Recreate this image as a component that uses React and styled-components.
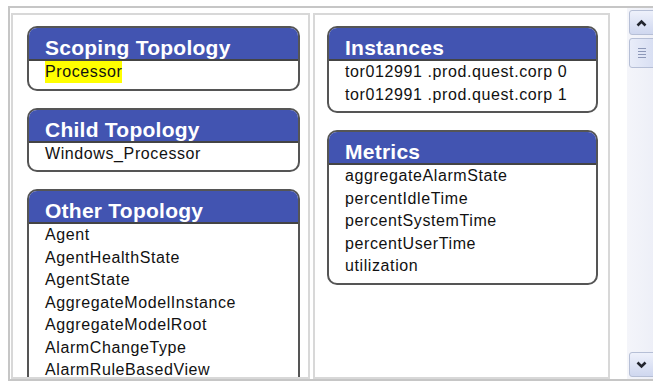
import React from "react";
import styled, { createGlobalStyle } from "styled-components";

const GlobalStyle = createGlobalStyle`
  html, body {
    margin: 0;
    padding: 0;
    background: #ffffff;
    overflow: hidden;
  }
  body {
    font-family: "Liberation Sans", Arial, sans-serif;
  }
`;

const Frame = styled.div`
  display: flex;
  width: 650px;
  height: 371px;
  margin: 6px 0 0 8px;
  border-top: 2px solid #c6c6c6;
  border-left: 2px solid #c6c6c6;
  border-bottom: 2px solid #c6c6c6;
  background: #ffffff;
`;

const Panels = styled.div`
  display: flex;
  gap: 3px;
  padding: 5px 0 0 1px;
`;

const Panel = styled.div`
  box-sizing: border-box;
  width: ${(p) => p.$width}px;
  height: 100%;
  border: 2px solid #d8d8d8;
  padding: ${(p) => p.$pad};
  display: flex;
  flex-direction: column;
  gap: 17px;
  overflow: hidden;
`;

const Card = styled.div`
  flex-shrink: 0;
  border: 2px solid #555555;
  border-radius: 10px;
  overflow: hidden;
  background: #ffffff;
`;

const Header = styled.div`
  height: 33px;
  padding: 8px 0 0 16px;
  box-sizing: border-box;
  background: #4254b1;
  border-bottom: 2px solid #444444;
  color: #ffffff;
  font-family: "Liberation Sans", Arial, sans-serif;
  font-weight: bold;
  font-size: 21px;
  letter-spacing: 0.25px;
  line-height: 23px;
  white-space: nowrap;
`;

const Body = styled.div`
  padding: 0 6px 5px 16px;
  font-size: 16px;
  line-height: 22.5px;
  letter-spacing: 0.6px;
  color: #111111;
`;

const Item = styled.div`
  white-space: nowrap;
`;

const Highlight = styled.span`
  display: inline-block;
  background: #ffff00;
  line-height: 22px;
`;

const ScrollBar = styled.div`
  margin-left: 17px;
  width: 31px;
  display: flex;
  flex-direction: column;
  padding: 2px 0 2px 2px;
  box-sizing: border-box;
  background: linear-gradient(to right, #f4f5fa, #eceef7);
`;

const ScrollButton = styled.div`
  height: 25px;
  box-sizing: border-box;
  border: 1px solid #b6bfd6;
  border-radius: 3px;
  background: linear-gradient(to bottom, #eef1fb, #cfd7ef);
  display: flex;
  align-items: center;
  justify-content: center;
  padding-right: 4px;
  margin-top: ${(p) => (p.$down ? "auto" : "0")};
`;

const Thumb = styled.div`
  height: 30px;
  margin-top: 3px;
  box-sizing: border-box;
  border: 1px solid #b6bfd6;
  border-radius: 3px;
  background: linear-gradient(to right, #e9edf9, #d6ddf2);
  display: flex;
  flex-direction: column;
  align-items: center;
  justify-content: center;
  gap: 2px;
  padding-right: 4px;
`;

const Grip = styled.div`
  width: 8px;
  height: 1px;
  background: #8d98b8;
`;

const Chevron = ({ down }) => (
  <svg width="11" height="8" viewBox="0 0 11 8">
    <path
      d={down ? "M1.5 1.5 L5.5 5.5 L9.5 1.5" : "M1.5 6.5 L5.5 2.5 L9.5 6.5"}
      fill="none"
      stroke="#22252e"
      strokeWidth="2.6"
    />
  </svg>
);

const left = [
  { title: "Scoping Topology", items: ["Processor"], highlight: 0 },
  { title: "Child Topology", items: ["Windows_Processor"] },
  {
    title: "Other Topology",
    items: [
      "Agent",
      "AgentHealthState",
      "AgentState",
      "AggregateModelInstance",
      "AggregateModelRoot",
      "AlarmChangeType",
      "AlarmRuleBasedView",
    ],
  },
];

const right = [
  {
    title: "Instances",
    items: ["tor012991 .prod.quest.corp 0", "tor012991 .prod.quest.corp 1"],
  },
  {
    title: "Metrics",
    items: [
      "aggregateAlarmState",
      "percentIdleTime",
      "percentSystemTime",
      "percentUserTime",
      "utilization",
    ],
  },
];

function Section({ title, items, highlight }) {
  return (
    <Card>
      <Header>{title}</Header>
      <Body>
        {items.map((it, i) => (
          <Item key={it}>
            {i === highlight ? <Highlight>{it}</Highlight> : it}
          </Item>
        ))}
      </Body>
    </Card>
  );
}

export default function App() {
  return (
    <>
      <GlobalStyle />
      <Frame>
        <Panels>
          <Panel $width={299} $pad="11px 8px 0 14px">
            {left.map((s) => (
              <Section key={s.title} {...s} />
            ))}
          </Panel>
          <Panel $width={297} $pad="11px 10px 0 12px">
            {right.map((s) => (
              <Section key={s.title} {...s} />
            ))}
          </Panel>
        </Panels>
        <ScrollBar>
          <ScrollButton>
            <Chevron />
          </ScrollButton>
          <Thumb>
            <Grip />
            <Grip />
            <Grip />
            <Grip />
          </Thumb>
          <ScrollButton $down>
            <Chevron down />
          </ScrollButton>
        </ScrollBar>
      </Frame>
    </>
  );
}
